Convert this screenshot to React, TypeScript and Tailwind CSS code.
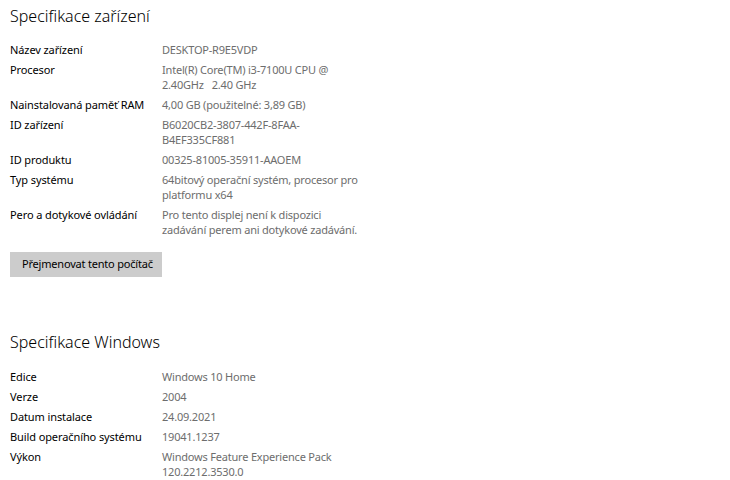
import React from "react";

type Row = { label: string; value: string[] };

const device: Row[] = [
  { label: "Název zařízení", value: ["DESKTOP-R9E5VDP"] },
  { label: "Procesor", value: ["Intel(R) Core(TM) i3-7100U CPU @", "2.40GHz   2.40 GHz"] },
  { label: "Nainstalovaná paměť RAM", value: ["4,00 GB (použitelné: 3,89 GB)"] },
  { label: "ID zařízení", value: ["B6020CB2-3807-442F-8FAA-", "B4EF335CF881"] },
  { label: "ID produktu", value: ["00325-81005-35911-AAOEM"] },
  { label: "Typ systému", value: ["64bitový operační systém, procesor pro", "platformu x64"] },
  { label: "Pero a dotykové ovládání", value: ["Pro tento displej není k dispozici", "zadávání perem ani dotykové zadávání."] },
];

const windows: Row[] = [
  { label: "Edice", value: ["Windows 10 Home"] },
  { label: "Verze", value: ["2004"] },
  { label: "Datum instalace", value: ["24.09.2021"] },
  { label: "Build operačního systému", value: ["19041.1237"] },
  { label: "Výkon", value: ["Windows Feature Experience Pack", "120.2212.3530.0"] },
];

function Rows({ rows }: { rows: Row[] }) {
  return (
    <div className="flex flex-col gap-[5px]">
      {rows.map((r) => (
        <div key={r.label} className="flex text-[11px] leading-[15px]">
          <div className="w-[152px] shrink-0 text-black tracking-[-0.1px]">{r.label}</div>
          <div className="text-[#6d6d6d] whitespace-pre tracking-[-0.2px]">
            {r.value.map((v, i) => (
              <div key={i}>{v}</div>
            ))}
          </div>
        </div>
      ))}
    </div>
  );
}

export default function App() {
  return (
    <div
      className="w-[730px] h-[480px] bg-white pl-[10px] pt-[4px] overflow-hidden"
      style={{ fontFamily: '"Noto Sans", "Open Sans", sans-serif' }}
    >
      <h1 className="text-[16px] leading-[24px] font-light text-black">Specifikace zařízení</h1>
      <div className="mt-[14px]">
        <Rows rows={device} />
      </div>
      <button className="mt-[15px] block w-[152px] h-[25px] bg-[#cccccc] text-[11px] tracking-[-0.2px] text-black text-left pl-[12px]">
        Přejmenovat tento počítač
      </button>
      <h1 className="mt-[53px] text-[16px] leading-[24px] font-light text-black">Specifikace Windows</h1>
      <div className="mt-[15px]">
        <Rows rows={windows} />
      </div>
    </div>
  );
}
